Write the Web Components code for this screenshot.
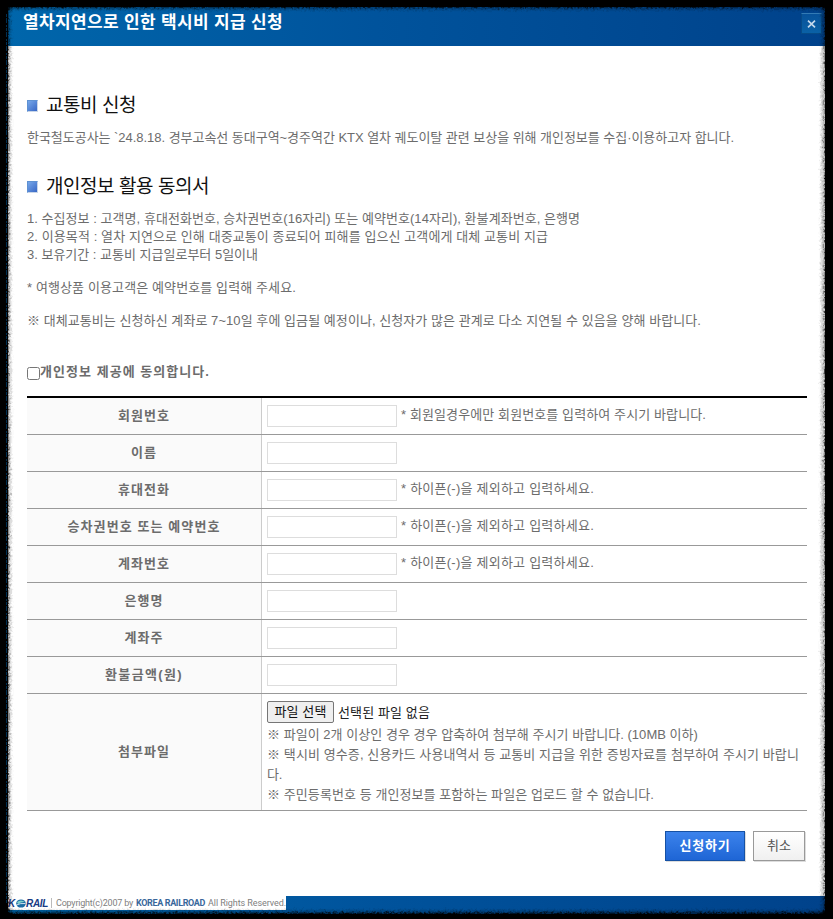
<!DOCTYPE html>
<html lang="ko">
<head>
<meta charset="utf-8">
<title>열차지연으로 인한 택시비 지급 신청</title>
<style>
  body {
    margin: 0;
    background: #000;
    color: #6c6c6c;
    font: 13px/18px "Liberation Sans", "Noto Sans CJK KR", sans-serif;
  }
</style>
</head>
<body>
<popup-frame>
  <popup-header slot="header"><fit-text width="260">열차지연으로 인한 택시비 지급 신청</fit-text></popup-header>

  <section-title><fit-text width="90">교통비 신청</fit-text></section-title>
  <text-block style="margin:12px 0 27px"><fit-text width="707">한국철도공사는 `24.8.18. 경부고속선 동대구역~경주역간 KTX 열차 궤도이탈 관련 보상을 위해 개인정보를 수집·이용하고자 합니다.</fit-text></text-block>

  <section-title><fit-text width="163">개인정보 활용 동의서</fit-text></section-title>
  <text-block style="margin-top:12px">
    <fit-text width="553">1. 수집정보 : 고객명, 휴대전화번호, 승차권번호(16자리) 또는 예약번호(14자리), 환불계좌번호, 은행명</fit-text>
    <fit-text width="521">2. 이용목적 : 열차 지연으로 인해 대중교통이 종료되어 피해를 입으신 고객에게 대체 교통비 지급</fit-text>
    <fit-text width="231">3. 보유기간 : 교통비 지급일로부터 5일이내</fit-text>
  </text-block>
  <text-block style="margin-top:15px"><fit-text width="269">* 여행상품 이용고객은 예약번호를 입력해 주세요.</fit-text></text-block>
  <text-block style="margin-top:15px"><fit-text width="674">※ 대체교통비는 신청하신 계좌로 7~10일 후에 입금될 예정이나, 신청자가 많은 관계로 다소 지연될 수 있음을 양해 바랍니다.</fit-text></text-block>

  <agree-check><fit-text width="170">개인정보 제공에 동의합니다.</fit-text></agree-check>

  <form-table>
    <form-row><fit-text slot="label" width="52">회원번호</fit-text><text-field></text-field><fit-text width="305">* 회원일경우에만 회원번호를 입력하여 주시기 바랍니다.</fit-text></form-row>
    <form-row><fit-text slot="label" width="26">이름</fit-text><text-field></text-field></form-row>
    <form-row><fit-text slot="label" width="52">휴대전화</fit-text><text-field></text-field><fit-text width="193">* 하이픈(-)을 제외하고 입력하세요.</fit-text></form-row>
    <form-row><fit-text slot="label" width="153">승차권번호 또는 예약번호</fit-text><text-field></text-field><fit-text width="193">* 하이픈(-)을 제외하고 입력하세요.</fit-text></form-row>
    <form-row><fit-text slot="label" width="52">계좌번호</fit-text><text-field></text-field><fit-text width="193">* 하이픈(-)을 제외하고 입력하세요.</fit-text></form-row>
    <form-row><fit-text slot="label" width="39">은행명</fit-text><text-field></text-field></form-row>
    <form-row><fit-text slot="label" width="39">계좌주</fit-text><text-field></text-field></form-row>
    <form-row><fit-text slot="label" width="78">환불금액(원)</fit-text><text-field></text-field></form-row>
    <form-row tall>
      <fit-text slot="label" width="52">첨부파일</fit-text>
      <file-field>
        <fit-text width="431">※ 파일이 2개 이상인 경우 경우 압축하여 첨부해 주시기 바랍니다. (10MB 이하)</fit-text>
        <fit-text width="532">※ 택시비 영수증, 신용카드 사용내역서 등 교통비 지급을 위한 증빙자료를 첨부하여 주시기 바랍니</fit-text>
        <fit-text width="15">다.</fit-text>
        <fit-text width="387">※ 주민등록번호 등 개인정보를 포함하는 파일은 업로드 할 수 없습니다.</fit-text>
      </file-field>
    </form-row>
  </form-table>

  <button-bar>
    <push-button primary><fit-text width="51">신청하기</fit-text></push-button>
    <push-button><fit-text width="24">취소</fit-text></push-button>
  </button-bar>

  <popup-footer slot="footer"></popup-footer>
</popup-frame>

<script>
function define(name, html) {
  const template = document.createElement("template");
  template.innerHTML = html;

  customElements.define(name, class extends HTMLElement {
    constructor() {
      super();
      this.attachShadow({ mode: "open" });
      this.shadowRoot.appendChild(template.content.cloneNode(true));
    }
  });
}

define("popup-frame", `
<style>
  :host { display: block; position: relative; box-sizing: border-box; width: 833px; height: 919px; padding: 7px 8px 5px; overflow: hidden; }
  .window { display: flex; flex-direction: column; height: 907px; background: #fff; }
  main { flex: 1; padding: 47px 18px 0 19px; }
  .edge { position: absolute; inset: 0; pointer-events: none; }
</style>
<div class="window">
  <slot name="header"></slot>
  <main><slot></slot></main>
  <slot name="footer"></slot>
</div>
<svg class="edge" width="833" height="919">
  <defs>
    <filter id="rough" x="-5%" y="-5%" width="110%" height="110%">
      <feTurbulence type="fractalNoise" baseFrequency=".45" numOctaves="2" seed="4" result="n"/>
      <feGaussianBlur in="SourceGraphic" stdDeviation="1" result="b"/>
      <feDisplacementMap in="b" in2="n" scale="5" xChannelSelector="R" yChannelSelector="G"/>
    </filter>
  </defs>
  <g filter="url(#rough)">
    <rect x="8" y="7" width="816" height="906" rx="7" fill="none" stroke="#000" stroke-opacity=".2" stroke-width="6"/>
    <path fill="#000" fill-rule="evenodd" d="M-20-20H853V939H-20ZM14 7H819Q825 7 825 13V906Q825 913 818 913H15Q8 913 8 906V13Q8 7 14 7Z"/>
  </g>
  <path d="M6.5 14V903" stroke="#004f87" stroke-opacity=".6" stroke-dasharray="3 1 5 2 2 1"/>
</svg>
`);

define("popup-header", `
<style>
  :host { display: flex; justify-content: space-between; align-items: flex-start; box-sizing: border-box; height: 39px; padding: 5px 3px 0 15px; background: linear-gradient(90deg, #0066ab, #00539c 45%, #00428b); color: #fff; font-size: 17px; font-weight: bold; line-height: 21px; }
  button { display: grid; place-items: center; width: 21px; height: 21px; margin: 1px 0 0; padding: 0; border: 1px solid #064b87; border-top-color: #337bb5; background: linear-gradient(#07529a, #0a61a6); }
</style>
<slot></slot>
<button aria-label="닫기"><svg width="9" height="8" viewBox="0 0 9 8"><path d="M1 .7 8 7.3M8 .7 1 7.3" stroke="#c5d9ec" stroke-width="1.7"/></svg></button>
`);

define("section-title", `
<style>
  :host { display: flex; align-items: center; gap: 8px; height: 24px; color: #111; font-size: 19px; line-height: 24px; }
  slot { display: block; padding-top: 2px; }
  i { box-sizing: border-box; width: 11px; height: 12px; margin-top: 1px; border: 1px solid #5e91d2; border-right-color: #c9d6e8; border-bottom-color: #c9d6e8; background: linear-gradient(135deg, #76a7e9, #3867c5); }
</style>
<i></i><slot></slot>
`);

define("text-block", `
<style>
  :host { display: flex; flex-direction: column; align-items: flex-start; }
</style>
<slot></slot>
`);

define("agree-check", `
<style>
  :host { display: flex; height: 34px; margin-top: 32px; font-weight: bold; line-height: 19px; }
  input { width: 13px; height: 13px; margin: 5px 0 0; }
</style>
<input type="checkbox"><slot></slot>
`);

define("form-table", `
<style>
  :host { display: block; border-top: 2px solid #000; }
</style>
<slot></slot>
`);

define("form-row", `
<style>
  :host { display: grid; grid-template-columns: 234px 1fr; height: 36px; border-bottom: 1px solid #999; }
  :host([tall]) { height: 116px; }
  .label { display: grid; place-items: center; background: #fafafa; font-weight: bold; }
  .value { display: flex; align-items: flex-start; gap: 4px; padding: 7px 0 0 5px; border-left: 1px solid #ccc; line-height: 19px; }
</style>
<div class="label"><slot name="label"></slot></div>
<div class="value"><slot></slot></div>
`);

define("text-field", `
<style>
  :host { display: block; }
  input { display: block; box-sizing: border-box; width: 130px; height: 22px; margin: 0; border: 1px solid #ddd; background: #fff; outline: 0; }
</style>
<input type="text">
`);

define("file-field", `
<style>
  :host { display: flex; flex-direction: column; align-items: flex-start; line-height: 20px; }
  .file { display: flex; gap: 4px; height: 24px; color: #222; line-height: 23px; }
  button { display: grid; place-items: center; box-sizing: border-box; width: 67px; height: 22px; padding: 0; border: 1px solid #767676; border-radius: 2px; background: #efefef; color: #111; font: inherit; line-height: 20px; }
</style>
<div class="file">
  <button><fit-text width="52">파일 선택</fit-text></button>
  <fit-text width="92">선택된 파일 없음</fit-text>
</div>
<slot></slot>
`);

define("button-bar", `
<style>
  :host { display: flex; justify-content: flex-end; gap: 8px; padding: 20px 2px 0 0; }
</style>
<slot></slot>
`);

define("push-button", `
<style>
  :host { display: block; }
  button { display: grid; place-items: center; box-sizing: border-box; width: 52px; height: 30px; padding: 0; border: 1px solid #999; background: linear-gradient(#fff, #f0f0f0); box-shadow: 1px 1px 0 #ddd; color: #555; font: inherit; }
  :host([primary]) button { width: 80px; border-color: #1651a4; background: linear-gradient(#3c83ec, #1e65d5); color: #fff; font-weight: bold; }
</style>
<button><slot></slot></button>
`);

define("popup-footer", `
<style>
  :host { display: flex; height: 18px; background: linear-gradient(90deg, #0066ab, #00539c 45%, #00428b); }
  .legal { display: flex; align-items: center; box-sizing: border-box; width: 278px; height: 14px; background: #fff; color: #808080; font-size: 9px; line-height: 13px; }
  .logo { display: flex; align-items: center; width: 40px; color: #173a83; font-size: 10px; font-weight: bold; font-style: italic; }
  .bar { width: 1px; height: 10px; margin: 0 4px 0 3px; background: #bbb; }
  .copy { display: flex; gap: 3px; font-family: Roboto, "Liberation Sans", sans-serif; }
  b { color: #39679b; }
</style>
<div class="legal">
  <span class="logo">
    <fit-text width="8">K</fit-text>
    <svg width="10" height="9" viewBox="0 0 10 9"><ellipse cx="5" cy="4.5" rx="4.8" ry="4.1" fill="#1c6da5"/><path d="M1 3Q5 0 9 3 5 2.6 2 5Z" fill="#7fd0c9"/><path d="M.5 6Q4 4 9.5 4.5" fill="none" stroke="#fff" stroke-width=".8"/></svg>
    <fit-text width="22">RAIL</fit-text>
  </span>
  <span class="bar"></span>
  <span class="copy">
    <fit-text width="77">Copyright(c)2007 by</fit-text>
    <b><fit-text width="69">KOREA RAILROAD</fit-text></b>
    <fit-text width="78">All Rights Reserved.</fit-text>
  </span>
</div>
`);

// one line of text, tracked so that it fills the given width
class FitText extends HTMLElement {
  constructor() {
    super();
    this.attachShadow({ mode: "open" });
    this.shadowRoot.innerHTML = `
      <style>
        :host { display: block; white-space: nowrap; }
        span { display: inline-block; vertical-align: top; }
      </style>
      <span><slot></slot></span>`;
  }

  connectedCallback() {
    const width = Number(this.getAttribute("width"));
    const span = this.shadowRoot.querySelector("span");
    const spacing = (width - span.getBoundingClientRect().width) / this.textContent.length;
    span.style.letterSpacing = spacing + "px";
    this.style.width = width + "px";
  }
}

customElements.define("fit-text", FitText);
</script>
</body>
</html>
